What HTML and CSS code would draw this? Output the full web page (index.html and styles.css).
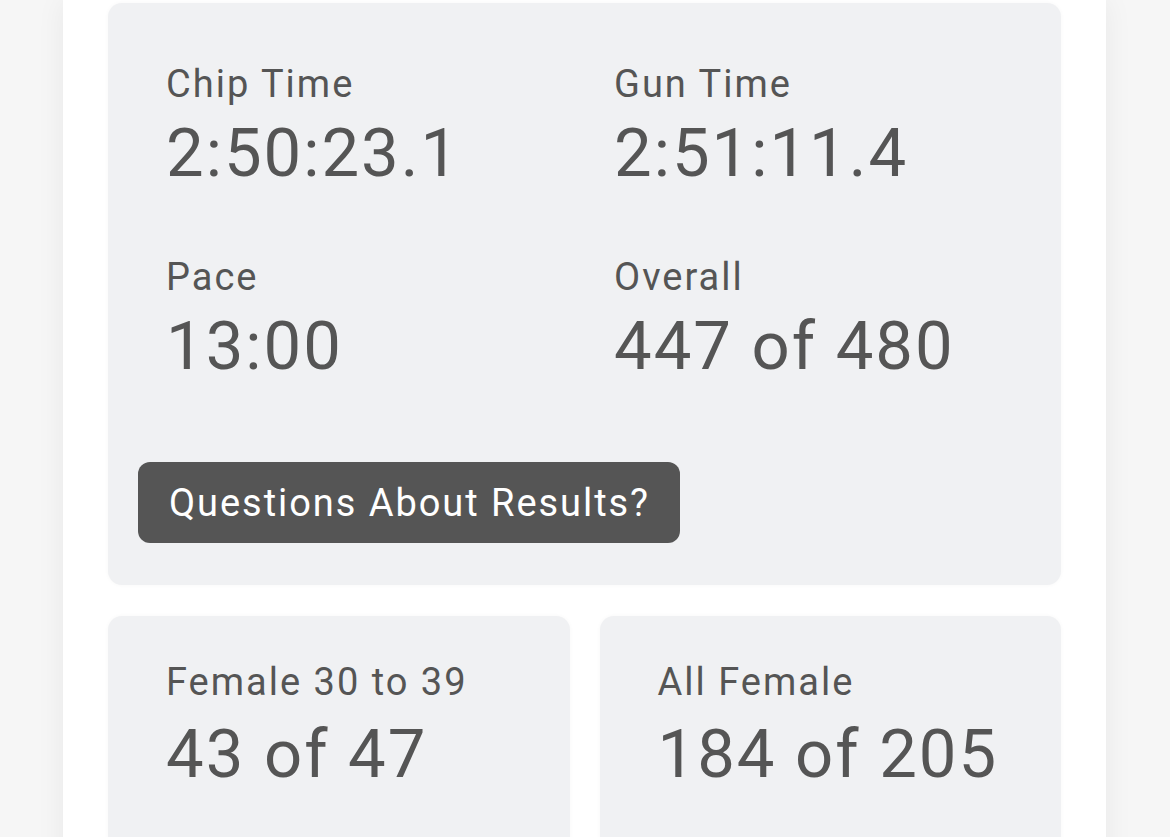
FILE: index.html
```html
<!DOCTYPE html>
<html lang="en">
<head>
<meta charset="utf-8">
<title>Results</title>
<link rel="stylesheet" href="styles.css">
</head>
<body>
<div class="page">
  <section class="card main-card">
    <div class="stats">
      <div class="stat">
        <div class="label">Chip Time</div>
        <div class="value">2:50:23.1</div>
      </div>
      <div class="stat">
        <div class="label">Gun Time</div>
        <div class="value">2:51:11.4</div>
      </div>
      <div class="stat">
        <div class="label">Pace</div>
        <div class="value">13:00</div>
      </div>
      <div class="stat">
        <div class="label">Overall</div>
        <div class="value">447 of 480</div>
      </div>
    </div>
    <button class="questions">Questions About Results?</button>
  </section>
  <div class="splits">
    <section class="card small-card">
      <div class="label">Female 30 to 39</div>
      <div class="value">43 of 47</div>
    </section>
    <section class="card small-card">
      <div class="label">All Female</div>
      <div class="value">184 of 205</div>
    </section>
  </div>
</div>
</body>
</html>
```

FILE: styles.css
```css
html, body {
  margin: 0;
  padding: 0;
  height: 100%;
}
body {
  background: #f6f6f6;
  font-family: Roboto, "Liberation Sans", Arial, sans-serif;
  color: #555555;
  overflow: hidden;
}
.page {
  width: 1043px;
  margin-left: 63px;
  min-height: 100%;
  background: #ffffff;
  box-shadow: 0 0 28px rgba(0, 0, 0, 0.06);
  padding: 3px 45px 0;
  box-sizing: border-box;
}
.card {
  background: #f0f1f3;
  border-radius: 14px;
  box-shadow: 0 0 4px rgba(0, 0, 0, 0.035);
  box-sizing: border-box;
}
.main-card {
  padding: 62px 30px 42px;
}
.stats {
  display: grid;
  grid-template-columns: 1fr 1fr;
  column-gap: 57px;
  row-gap: 71px;
  padding: 0 26px 0 28px;
}
.label {
  font-size: 38px;
  line-height: 38px;
  letter-spacing: 2px;
}
.value {
  font-size: 67px;
  line-height: 68px;
  margin-top: 16px;
  letter-spacing: 2px;
}
.questions {
  display: inline-flex;
  align-items: center;
  margin-top: 82px;
  height: 81px;
  padding: 0 30px 0 31px;
  border: none;
  border-radius: 12px;
  background: #555555;
  color: #ffffff;
  font-family: Roboto, "Liberation Sans", Arial, sans-serif;
  font-size: 38px;
  letter-spacing: 1.95px;
}
.splits {
  display: grid;
  grid-template-columns: 1fr 1fr;
  column-gap: 30px;
  margin-top: 31px;
}
.small-card {
  height: 260px;
  padding: 47px 56px 0 58px;
}
.small-card .value {
  margin-top: 19px;
}
```
